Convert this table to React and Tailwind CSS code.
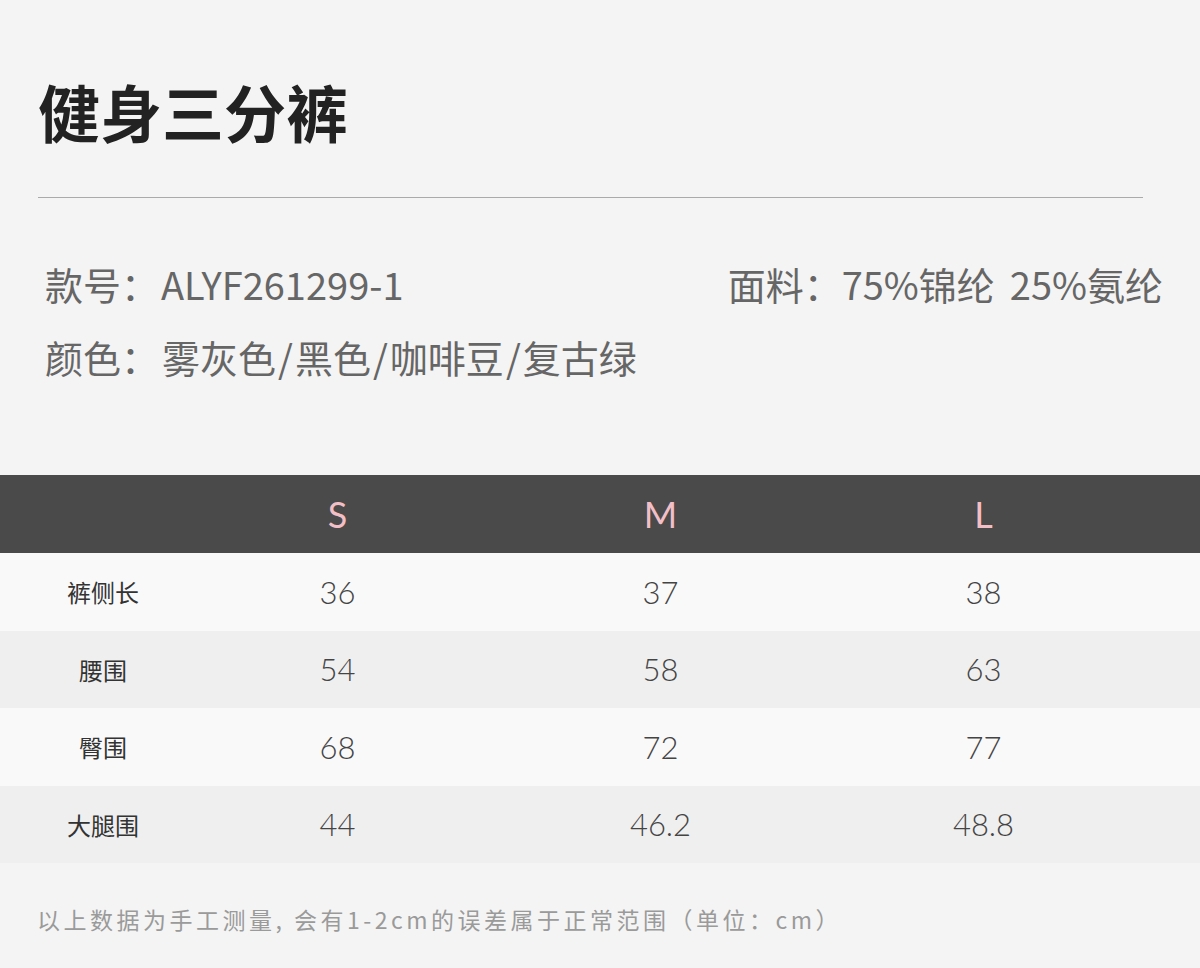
const sizes = ["S", "M", "L"];

const rows = [
  { label: "裤侧长", values: ["36", "37", "38"], h: "h-[78px]", bg: "bg-[#f9f9f9]" },
  { label: "腰围", values: ["54", "58", "63"], h: "h-[77px]", bg: "bg-[#efefef]" },
  { label: "臀围", values: ["68", "72", "77"], h: "h-[78px]", bg: "bg-[#f9f9f9]" },
  { label: "大腿围", values: ["44", "46.2", "48.8"], h: "h-[77px]", bg: "bg-[#efefef]" },
];

const colors = ["雾灰色", "黑色", "咖啡豆", "复古绿"];

const cjk = "font-['Noto_Sans_CJK_SC',sans-serif]";
const num = "font-['Lato','Noto_Sans_CJK_SC',sans-serif]";

export default function App() {
  return (
    <div className={`w-[1200px] h-[968px] overflow-hidden bg-[#f4f4f4] ${cjk}`}>
      <h1 className="px-[38px] pt-[80px] text-[62px] font-bold leading-none text-[#222]">健身三分裤</h1>
      <div className="mx-[38px] mt-[55px] h-px w-[1105px] bg-[#aaaaaa]" />

      <div className="mt-[67px] pl-[45px] pr-[37px] text-[38px] leading-none text-[#666]">
        <div className="flex justify-between">
          <p>
            款号：<span className="ml-[2px]">ALYF261299-1</span>
          </p>
          <p>
            面料：75%锦纶<span className="inline-block w-[15px]" />25%氨纶
          </p>
        </div>
        <p className="mt-[35px]">
          颜色：
          <span className="ml-[3px]">
            {colors.map((c, i) => (
              <span key={c}>
                {i > 0 && <span className="mx-[2px]">/</span>}
                {c}
              </span>
            ))}
          </span>
        </p>
      </div>

      <div className="mt-[99px]">
        <div className="grid h-[78px] grid-cols-[176px_323px_323px_323px] items-center bg-[#4a4a4a]">
          <div />
          {sizes.map((s) => (
            <div key={s} className={`text-center text-[36px] font-normal leading-none text-[#f3bfc7] ${num}`}>
              {s}
            </div>
          ))}
        </div>
        {rows.map((r) => (
          <div key={r.label} className={`grid ${r.h} grid-cols-[176px_323px_323px_323px] items-center ${r.bg}`}>
            <div className="pl-[30px] text-center text-[24px] leading-none text-[#333]">{r.label}</div>
            {r.values.map((v, i) => (
              <div key={i} className={`text-center text-[31px] font-light leading-none text-[#444] ${num}`}>
                {v}
              </div>
            ))}
          </div>
        ))}
      </div>

      <p className="mt-[45px] pl-[37px] text-[23px] leading-none tracking-[3.5px] text-[#9a9a9a]">
        以上数据为手工测量, 会有1-2cm的误差属于正常范围（单位：cm）
      </p>
    </div>
  );
}
